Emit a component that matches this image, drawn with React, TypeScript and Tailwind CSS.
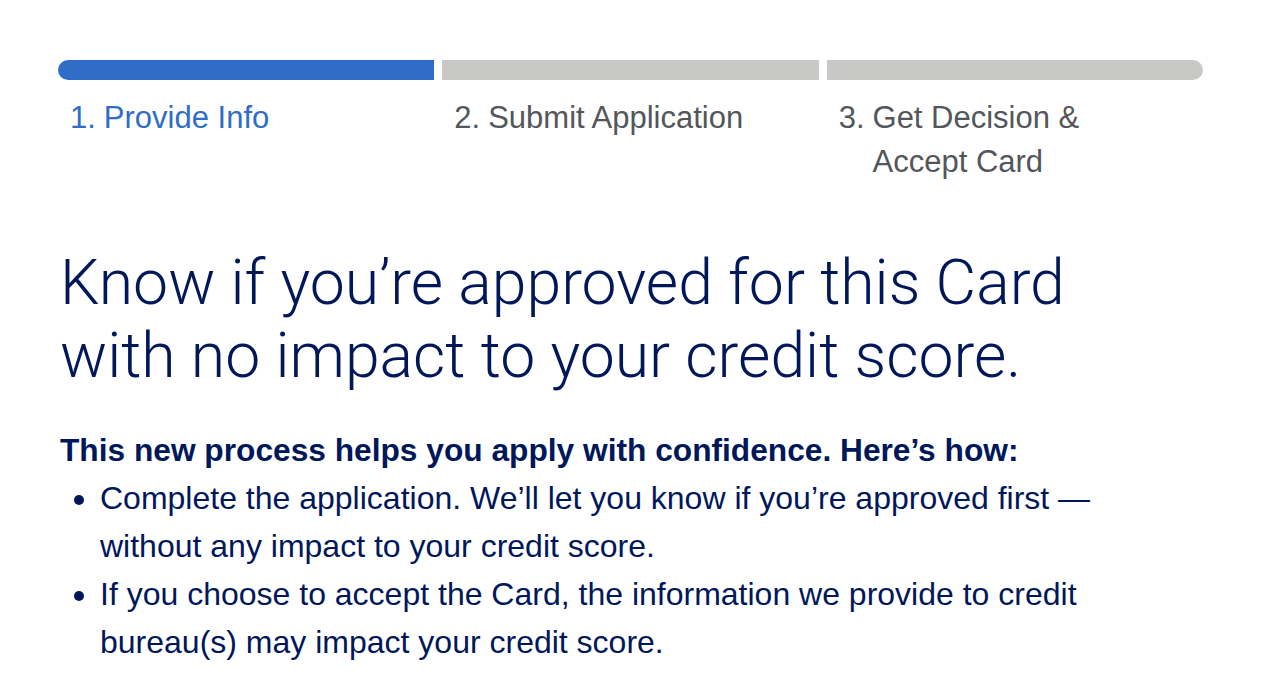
const steps = [
  { n: "1.", label: "Provide Info", active: true },
  { n: "2.", label: "Submit Application", active: false },
  { n: "3.", label: "Get Decision & Accept Card", active: false },
];

export default function App() {
  return (
    <div className="min-h-screen bg-white pt-[60px] pl-[58px] pr-[65px] font-['Liberation_Sans',Arial,sans-serif]">
      <div className="grid grid-cols-3 gap-2">
        {steps.map((s, i) => (
          <div key={s.n}>
            <div
              className={
                (s.active ? "bg-[#306dc8]" : "bg-[#c8c8c6]") +
                " h-5" +
                (i === 0 ? " rounded-l-full" : "") +
                (i === steps.length - 1 ? " rounded-r-full" : "")
              }
            />
            <div
              className={
                "mt-4 flex pl-3 pr-[40px] text-[31px] leading-[44px] " +
                (s.active ? "text-[#306dc8]" : "text-[#53565a]")
              }
            >
              <span className="mr-[8px] shrink-0">{s.n}</span>
              <span>{s.label}</span>
            </div>
          </div>
        ))}
      </div>

      <h1 className="mt-[62px] pl-[2px] font-['Roboto',sans-serif] font-light text-[62.5px] leading-[73px] text-[#00175a]">
        Know if you’re approved for this Card
        <br />
        with no impact to your credit score.
      </h1>

      <p className="mt-[34px] pl-[2px] text-[31.7px] leading-[48px] font-bold text-[#00175a]">
        This new process helps you apply with confidence. Here’s how:
      </p>
      <ul className="pl-[42px] pr-[90px] text-[32px] leading-[48px] text-[#00175a] list-disc">
        <li>
          Complete the application. We’ll let you know if you’re approved first —
          without any impact to your credit score.
        </li>
        <li>
          If you choose to accept the Card, the information we provide to credit
          bureau(s) may impact your credit score.
        </li>
      </ul>
    </div>
  );
}
